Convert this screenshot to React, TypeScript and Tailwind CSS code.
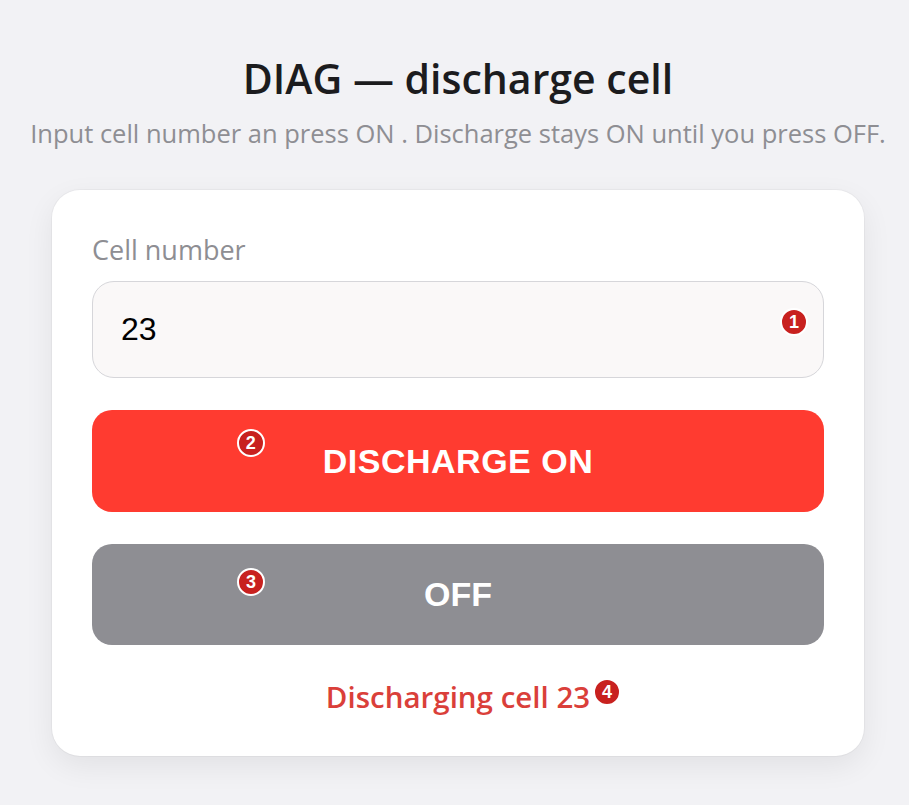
import React, { useState } from "react";

const Marker = ({ n, className = "" }: { n: number; className?: string }) => (
  <span
    className={`inline-grid h-[28px] w-[28px] place-items-center rounded-full border-2 border-white bg-[#c8211f] text-[18px] font-bold leading-none text-white [font-family:'Liberation_Sans',Arial,sans-serif] ${className}`}
  >
    {n}
  </span>
);

export default function App() {
  const [cell, setCell] = useState("23");
  const [active, setActive] = useState<string | null>("23");

  const btn =
    "relative flex w-full items-center justify-center rounded-[20px] text-[34px] font-bold text-white [font-family:'Liberation_Sans',Arial,sans-serif]";

  return (
    <div className="min-h-[805px] bg-[#f2f2f5] pl-[7px] [font-family:'Open_Sans','Noto_Sans',sans-serif]">
      <div className="flex flex-col items-center pt-[52px]">
        <h1 className="text-[41px] font-semibold leading-[52px] text-[#1c1c1e]">DIAG — discharge cell</h1>
        <p className="mt-[12px] text-[25.5px] leading-[34px] text-[#8e8e93]">
          Input cell number an press ON . Discharge stays ON until you press OFF.
        </p>

        <div className="mt-[40px] flex w-[812px] flex-col gap-[32px] rounded-[28px] bg-white px-[40px] pb-[39px] pt-[42px] shadow-[0_10px_30px_rgba(0,0,0,0.07)] ring-1 ring-black/[0.03]">
          {/* input */}
          <div className="flex flex-col gap-[13px]">
            <label className="block text-[27px] leading-[36px] text-[#8e8e93]">Cell number</label>
            <div className="relative">
              <input
                value={cell}
                onChange={(e) => setCell(e.target.value)}
                className="h-[97px] w-full rounded-[22px] border border-[#d6d6da] bg-[#faf8f8] px-[28px] text-[32px] text-black outline-none [font-family:'Liberation_Sans',Arial,sans-serif]"
              />
              <Marker n={1} className="absolute right-[16px] top-[27px]" />
            </div>
          </div>

          <button onClick={() => setActive(cell)} className={`${btn} h-[102px] bg-[#ff3b30] tracking-[0.5px]`}>
            <Marker n={2} className="absolute left-[145px] top-[19px]" />
            DISCHARGE ON
          </button>

          <button onClick={() => setActive(null)} className={`${btn} h-[101px] bg-[#8e8e93]`}>
            <Marker n={3} className="absolute left-[145px] top-[24px]" />
            OFF
          </button>

          <div className="text-center text-[29.5px] font-semibold leading-[40px] text-[#da3f3a]">
            <span className="relative">
              {active ? `Discharging cell ${active}` : "Idle"}
              <Marker n={4} className="absolute left-[calc(100%+3px)] top-[2px]" />
            </span>
          </div>
        </div>
      </div>
    </div>
  );
}
